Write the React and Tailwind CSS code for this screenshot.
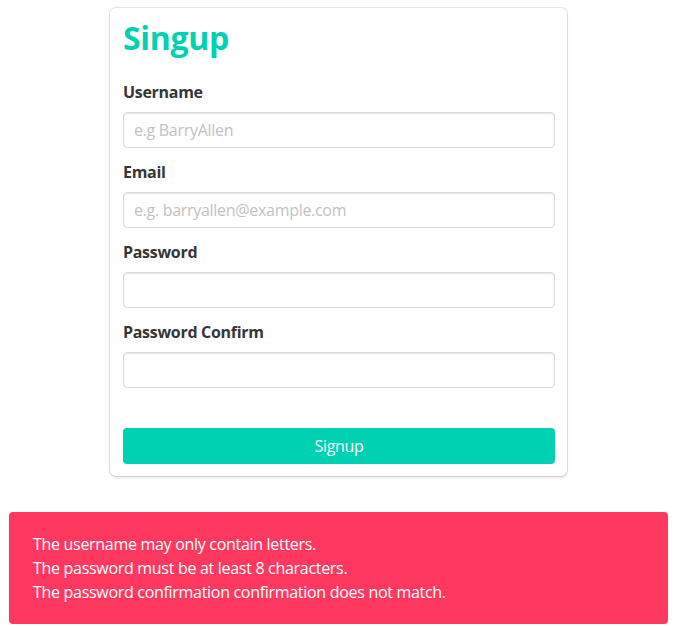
import React, { useState } from "react";

const fields = [
  { name: "username", label: "Username", type: "text", placeholder: "e.g BarryAllen" },
  { name: "email", label: "Email", type: "email", placeholder: "e.g. barryallen@example.com" },
  { name: "password", label: "Password", type: "password", placeholder: "" },
  { name: "password_confirmation", label: "Password Confirm", type: "password", placeholder: "" },
];

const errors = [
  "The username may only contain letters.",
  "The password must be at least 8 characters.",
  "The password confirmation confirmation does not match.",
];

const App = () => {
  const [formData, setFormData] = useState({
    username: "",
    email: "",
    password: "",
    password_confirmation: "",
  });

  const handleChange = (e) => {
    const { name, value } = e.target;
    setFormData((prev) => ({ ...prev, [name]: value }));
  };

  return (
    <div
      className="min-h-screen bg-white text-[#4a4a4a] text-base"
      style={{ fontFamily: '"Open Sans", "Noto Sans", sans-serif' }}
    >
      <div className="pt-2">
        <form
          onSubmit={(e) => e.preventDefault()}
          className="w-[457px] ml-[110px] bg-white rounded-md pt-3 pb-3 pl-[13px] pr-3 shadow-[0_2px_3px_rgba(10,10,10,0.1),0_0_0_1px_rgba(10,10,10,0.1)]"
        >
          <h1 className="text-[32px] leading-[36px] font-bold text-[#00d1b2] mb-6 tracking-[-0.3px]">
            Singup
          </h1>

          {fields.map((f) => (
            <div key={f.name} className="mb-3">
              <label className="block mb-2 font-bold text-[#363636] leading-6 tracking-[-0.3px]">
                {f.label}
              </label>
              <input
                name={f.name}
                type={f.type}
                value={formData[f.name]}
                onChange={handleChange}
                placeholder={f.placeholder}
                className="w-full h-9 px-[10px] rounded border border-[#dbdbdb] bg-white text-[#363636] placeholder:text-[#c2c2c2] shadow-[inset_0_1px_2px_rgba(10,10,10,0.1)] outline-none tracking-[-0.3px]"
              />
            </div>
          ))}

          <button
            type="submit"
            className="mt-7 w-full h-9 rounded bg-[#00d1b2] text-white tracking-[-0.3px]"
          >
            Signup
          </button>
        </form>
      </div>

      <div className="pl-[9px] pr-2 mt-9">
        <div className="bg-[#ff3860] text-white rounded pt-5 pb-5 pl-6 pr-10 leading-6 tracking-[-0.3px]">
          {errors.map((msg) => (
            <p key={msg}>{msg}</p>
          ))}
        </div>
      </div>
    </div>
  );
};

export default App;
